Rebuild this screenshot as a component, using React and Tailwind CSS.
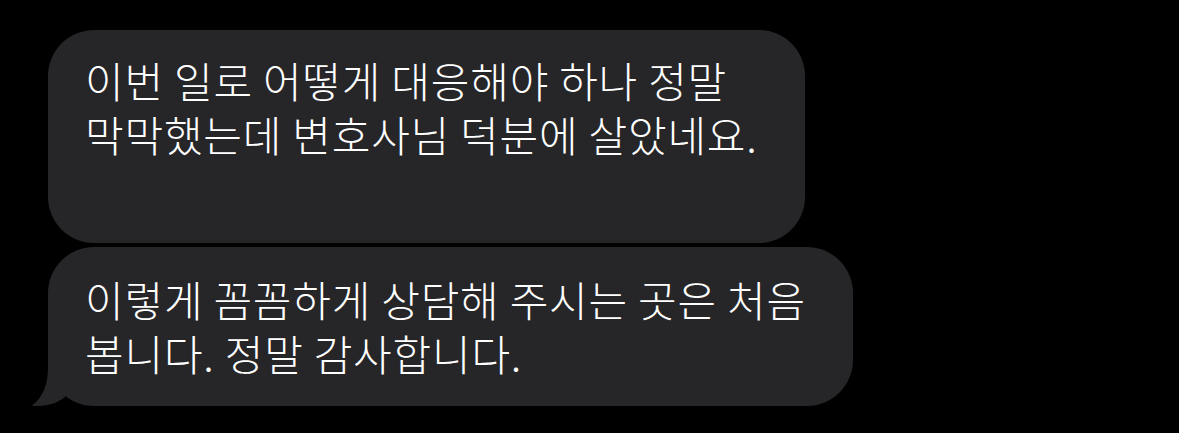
export default function App() {
  return (
    <div className="h-[433px] w-[1179px] bg-black overflow-hidden">
      <div className="flex flex-col items-start gap-[4px] pl-[48px] pt-[30px] font-['Noto_Sans_CJK_KR','Noto_Sans',sans-serif] text-[42px] font-light leading-[54px] tracking-[0.8px] text-white">
        {/* first bubble */}
        <div className="h-[213px] w-[757px] rounded-[46px] bg-[#262629] pl-[37px] pt-[23px]">
          <p>이번 일로 어떻게 대응해야 하나 정말</p>
          <p>막막했는데 변호사님 덕분에 살았네요.</p>
        </div>

        {/* second bubble with tail */}
        <div className="relative h-[159px] w-[805px] rounded-[46px] bg-[#262629] pl-[37px] pt-[25px]">
          <svg
            className="absolute left-[-20px] top-[100px]"
            width="70"
            height="59"
            viewBox="0 0 70 59"
          >
            <path
              d="M20 0 L20 20 C20 38 15 50 4 58.5 C5 59 7 59 9 59 C22 59 32 55 39 48 L50 30 L50 0 Z"
              fill="#262629"
            />
          </svg>
          <p className="relative">이렇게 꼼꼼하게 상담해 주시는 곳은 처음</p>
          <p className="relative">봅니다. 정말 감사합니다.</p>
        </div>
      </div>
    </div>
  )
}
